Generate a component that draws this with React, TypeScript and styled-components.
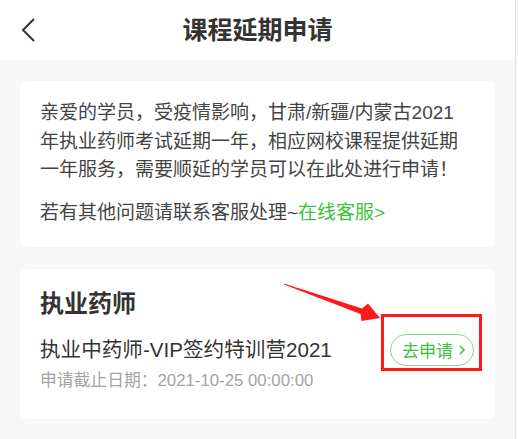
import styled, { createGlobalStyle } from "styled-components";

const GlobalStyle = createGlobalStyle`
  html, body {
    margin: 0;
    padding: 0;
    background: #f6f6f6;
  }
  body {
    font-family: "Liberation Sans", "Noto Sans CJK SC", sans-serif;
    color: #333;
  }
`;

const Page = styled.div`
  position: relative;
  width: 515px;
  min-height: 439px;
  background: #f7f7f7;
  border-right: 1px solid #e6e6e6;
`;

const Header = styled.header`
  position: relative;
  display: flex;
  align-items: center;
  justify-content: center;
  height: 60px;
  background: #fff;
`;

const BackButton = styled.button`
  position: absolute;
  left: 14px;
  top: 14px;
  display: flex;
  align-items: center;
  justify-content: center;
  width: 28px;
  height: 32px;
  padding: 0;
  background: transparent;
  border: 0;
`;

const Title = styled.h1`
  margin: 0;
  font-size: 25px;
  font-weight: bold;
  color: #333;
  line-height: 1;
`;

const Content = styled.main`
  display: flex;
  flex-direction: column;
  gap: 22px;
  padding: 21px 20px 22px;
`;

const Card = styled.section<{ $pad: string }>`
  position: relative;
  padding: ${(p) => p.$pad};
  background: #fff;
  border-radius: 6px;
`;

const Notice = styled.p<{ $gap?: number }>`
  margin: 0;
  margin-top: ${(p) => p.$gap ?? 0}px;
  font-size: 19px;
  line-height: 28.5px;
  color: #444;
`;

const Link = styled.a`
  color: #3cc13c;
  text-decoration: none;
`;

const Exam = styled.h2`
  margin: 0;
  font-size: 24px;
  line-height: 36px;
  font-weight: bold;
  color: #333;
`;

const CourseRow = styled.div`
  display: flex;
  align-items: center;
  justify-content: space-between;
  margin-top: 12px;
`;

const CourseName = styled.div`
  font-size: 20.6px;
  line-height: 30px;
  color: #333;
`;

const Deadline = styled.div`
  margin-top: 2px;
  font-size: 16.8px;
  line-height: 25px;
  color: #a3a3a3;
`;

const ApplyButton = styled.button`
  display: flex;
  align-items: center;
  gap: 5px;
  height: 32px;
  margin-right: 1px;
  padding: 0 7px 0 11px;
  font-family: inherit;
  font-size: 17px;
  color: #3cc13c;
  background: #fff;
  border: 1px solid #8ad68a;
  border-radius: 16px;
`;

const Highlight = styled.div`
  position: absolute;
  left: 361px;
  top: 45px;
  width: 95px;
  height: 51px;
  border: 3px solid #ff1a1a;
  pointer-events: none;
`;

const Arrow = styled.svg`
  position: absolute;
  left: 0;
  top: 0;
  pointer-events: none;
`;

function Chevron() {
  return (
    <svg width="14" height="24" viewBox="0 0 14 24" fill="none">
      <path d="M13 1 L2 12 L13 23" stroke="#333" strokeWidth="2" />
    </svg>
  );
}

export default function App() {
  return (
    <Page>
      <GlobalStyle />
      <Header>
        <BackButton aria-label="返回">
          <Chevron />
        </BackButton>
        <Title>课程延期申请</Title>
      </Header>
      <Content>
        <Card $pad="18px 30px 19px 20px">
          <Notice>
            亲爱的学员，受疫情影响，甘肃/新疆/内蒙古2021年执业药师考试延期一年，相应网校课程提供延期一年服务，需要顺延的学员可以在此处进行申请！
          </Notice>
          <Notice $gap={14.5}>
            若有其他问题请联系客服处理~<Link href="#">在线客服&gt;</Link>
          </Notice>
        </Card>
        <Card $pad="17px 20px 26px">
          <Exam>执业药师</Exam>
          <CourseRow>
            <CourseName>执业中药师-VIP签约特训营2021</CourseName>
            <ApplyButton>
              去申请
              <svg width="8" height="12" viewBox="0 0 8 12" fill="none">
                <path d="M2 2 L6 6 L2 10" stroke="#3cc13c" strokeWidth="1.6" />
              </svg>
            </ApplyButton>
          </CourseRow>
          <Deadline>申请截止日期：2021-10-25 00:00:00</Deadline>
          <Highlight />
        </Card>
      </Content>
      <Arrow width="515" height="439" viewBox="0 0 515 439">
        <polygon
          points="284,283.5 362,308.5 368,303.5 380,318 361.5,321 360.5,314 284,284.5"
          fill="#ff1a1a"
        />
      </Arrow>
    </Page>
  );
}
